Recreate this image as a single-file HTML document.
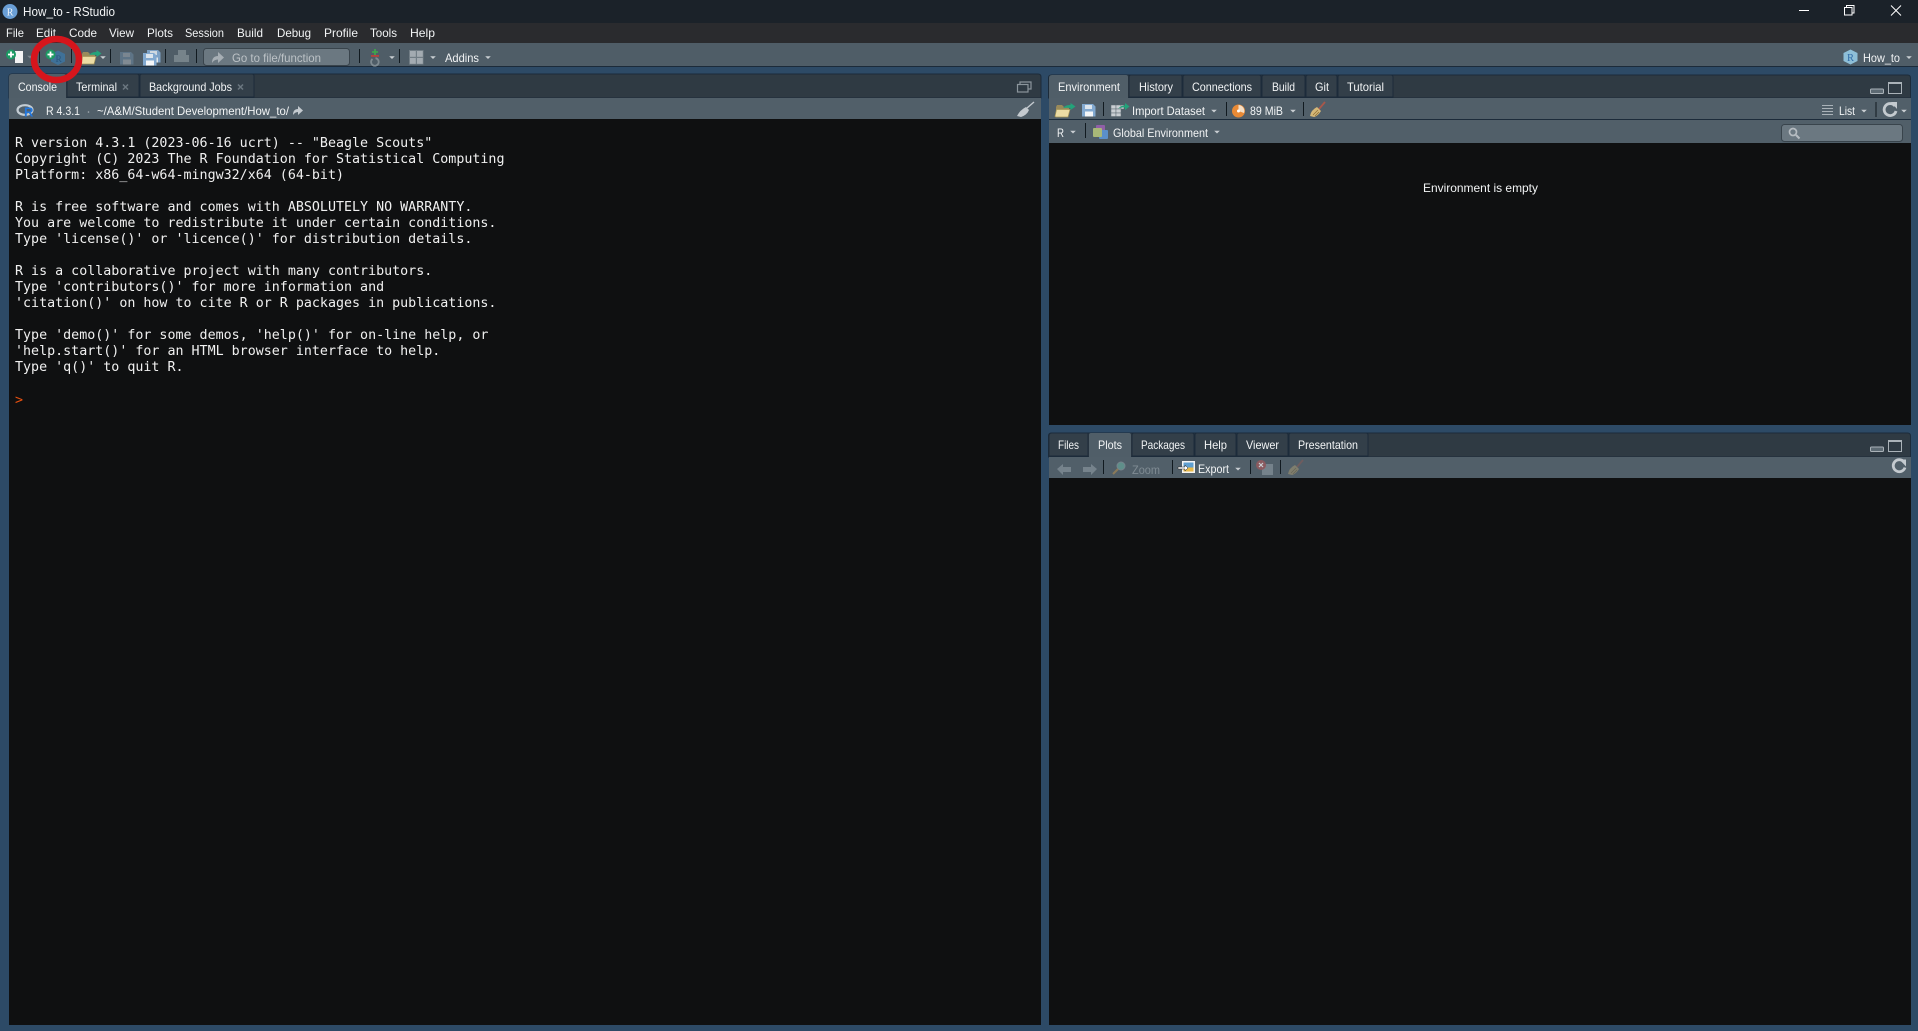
<!DOCTYPE html>
<html><head><meta charset="utf-8"><title>How_to - RStudio</title>
<style>
html,body{margin:0;padding:0;width:1918px;height:1031px;overflow:hidden;background:#2d4a66}
svg{display:block}
text{font-family:"Liberation Sans",sans-serif;font-size:12px;fill:#f2f4f5}
.m text{font-family:"DejaVu Sans Mono","Liberation Mono",monospace;font-size:13.33px;fill:#f0f0f0}
</style></head><body>
<svg width="1918" height="1031" viewBox="0 0 1918 1031" xmlns="http://www.w3.org/2000/svg">
<defs>
<path id="d" d="M-2.800 -1.300h5.600l-2.800 2.800z" fill="#c9ced2"/>
<g id="folder"><path d="M1 4l1-2h5l2 2h5v3H1z" fill="#9a8a5a"/><path d="M0 13.500l1.500-7h13.500l-2 7.500H1z" fill="#ecdca4" stroke="#a89658" stroke-width=".7"/><path d="M8 5q3-3.500 7.500-3V0l5 3.500-5 3.500V5Q11 4.500 8 5z" fill="#23a37a"/></g>
<g id="floppy"><path d="M0 0h11l2.500 2.500V12.500H0z" fill="#82a9d0"/><rect x="3" y="1" width="7" height="4" fill="#dde6ee"/><rect x="3" y="7.500" width="8" height="5" fill="#f4f6f8"/></g>
<g id="broom"><path d="M9 7L15 0" stroke="#a8574a" stroke-width="1.800"/><path d="M0 14Q1 8 7 5l4 4q-3 5-7 6z" fill="#d5b878"/><path d="M3 13l5-5M5 14l4-4" stroke="#8d6c30" stroke-width=".7"/></g>
</defs>

<rect width="1918" height="1031" fill="#2d4a66"/>
<!-- title bar -->
<rect width="1918" height="23" fill="#1b2229"/>
<circle cx="10" cy="11.500" r="7.500" fill="#6a9fd6"/>
<text x="6.800" y="15.500" style="font-family:'Liberation Serif',serif;font-size:10px;fill:#eef4fa">R</text>
<text x="23" y="16" textLength="92" lengthAdjust="spacingAndGlyphs" style="font-size:12.500px">How_to - RStudio</text>
<path d="M1799 10.500h10" stroke="#fff" stroke-width="1"/>
<path d="M1844.500 7.500h7.500v7.500h-7.500zM1846.500 7.500v-2h7.500v7.500h-2" fill="none" stroke="#fff" stroke-width="1"/>
<path d="M1890.500 5.500l10 10M1900.500 5.500l-10 10" stroke="#fff" stroke-width="1" transform="translate(.5,0)"/>

<!-- menu bar -->
<rect y="23" width="1918" height="20" fill="#2a2b2e"/>
<text x="6" y="37" textLength="18" lengthAdjust="spacingAndGlyphs">File</text>
<text x="36" y="37" textLength="20" lengthAdjust="spacingAndGlyphs">Edit</text>
<text x="69" y="37" textLength="28" lengthAdjust="spacingAndGlyphs">Code</text>
<text x="109" y="37" textLength="25" lengthAdjust="spacingAndGlyphs">View</text>
<text x="147" y="37" textLength="26" lengthAdjust="spacingAndGlyphs">Plots</text>
<text x="185" y="37" textLength="39" lengthAdjust="spacingAndGlyphs">Session</text>
<text x="237" y="37" textLength="26" lengthAdjust="spacingAndGlyphs">Build</text>
<text x="277" y="37" textLength="34" lengthAdjust="spacingAndGlyphs">Debug</text>
<text x="324" y="37" textLength="34" lengthAdjust="spacingAndGlyphs">Profile</text>
<text x="370" y="37" textLength="27" lengthAdjust="spacingAndGlyphs">Tools</text>
<text x="410" y="37" textLength="25" lengthAdjust="spacingAndGlyphs">Help</text>

<!-- main toolbar -->
<rect y="43" width="1918" height="23" fill="#4f5d67"/>
<rect y="66" width="1918" height="1" fill="#1c2b3a"/>
<!-- new file -->
<path d="M15 51h8v12h-8z" fill="#f4f4f4"/>
<circle cx="11" cy="54.500" r="5" fill="#1c9a63"/><path d="M11 51.500v6M8 54.500h6" stroke="#fff" stroke-width="1.800"/>
<use href="#d" x="30" y="57" opacity=".35"/>
<rect x="39" y="49" width="1" height="14" fill="#111a20"/>
<!-- new project -->
<path d="M58 50.500l7 3.500v7.500l-7 3.500-7-3.500V54z" fill="#3f7198"/>
<text x="55.500" y="62" style="font-family:'Liberation Serif',serif;font-size:9.500px;fill:#2a557c">R</text>
<circle cx="50.500" cy="54.500" r="5" fill="#1c9a63"/><path d="M50.500 51.500v6M47.500 54.500h6" stroke="#fff" stroke-width="1.800"/>
<rect x="71" y="49" width="1" height="14" fill="#111a20"/>
<use href="#folder" x="81" y="50"/>
<use href="#d" x="103" y="57.500"/>
<rect x="110" y="49" width="1" height="14" fill="#111a20"/>
<!-- saves -->
<g opacity=".3"><use href="#floppy" x="120" y="52"/></g>
<use href="#floppy" x="147" y="50" opacity=".9"/><use href="#floppy" x="143" y="53"/>
<rect x="165" y="49" width="1" height="14" fill="#111a20"/>
<path d="M178 50h8v5h3v7h-15v-7h4z" fill="#76838a"/>
<rect x="196" y="49" width="1" height="14" fill="#111a20"/>
<!-- go to file -->
<rect x="203.500" y="48.500" width="146" height="17" rx="3" fill="#6b7881" stroke="#39444c"/>
<path d="M212 63q0-7 6-7v-4l6 5.500-6 5.500v-3.500q-4 0-6 3.500z" fill="#a7afb5"/>
<text x="232" y="62" textLength="89" lengthAdjust="spacingAndGlyphs" style="fill:#bcc2c6">Go to file/function</text>
<rect x="359" y="49" width="1" height="14" fill="#111a20"/>
<!-- vcs-ish -->
<path d="M375 49v6M372 52h6" stroke="#3fa34d" stroke-width="1.800"/>
<rect x="371" y="55" width="8" height="1.800" fill="#b6423d"/>
<path d="M372.500 59a3.800 3.800 0 1 0 3-.8" fill="none" stroke="#7f8b92" stroke-width="1.800"/>
<use href="#d" x="392" y="57.500"/>
<rect x="399" y="49" width="1" height="14" fill="#111a20"/>
<rect x="409" y="50" width="14.500" height="14.500" fill="#717d85"/>
<g fill="#a3abb1"><rect x="410" y="51" width="5.800" height="5.800"/><rect x="417" y="51" width="5.800" height="5.800"/><rect x="410" y="58" width="5.800" height="5.800"/><rect x="417" y="58" width="5.800" height="5.800"/></g>
<use href="#d" x="433" y="57.500"/>
<text x="445" y="62" textLength="34" lengthAdjust="spacingAndGlyphs">Addins</text>
<use href="#d" x="488" y="57.500"/>
<!-- project right -->
<path d="M1850.500 49.500l7 3.500v8l-7 3.500-7-3.500v-8z" fill="#8ebfd8"/>
<text x="1847" y="61" style="font-family:'Liberation Serif',serif;font-size:10.500px;fill:#2f6ca8">R</text>
<text x="1863" y="62" textLength="37" lengthAdjust="spacingAndGlyphs">How_to</text>
<use href="#d" x="1909" y="57.500"/>

<!-- LEFT PANE -->
<path d="M9 77q0-3 3-3h1026q3 0 3 3v21H9z" fill="#2f3a43" stroke="#1c2b3a" stroke-width="1"/>
<path d="M9 98V77q0-3 3-3h52q2 0 2 2v22z" fill="#505e68"/>
<path d="M67 97V76q0-2 2-2h68q2 0 2 2v21z" fill="#333f49" stroke="#1c2b3a" stroke-width="1"/>
<path d="M140 97V76q0-2 2-2h110q2 0 2 2v21z" fill="#333f49" stroke="#1c2b3a" stroke-width="1"/>
<text x="18" y="91" textLength="39" lengthAdjust="spacingAndGlyphs">Console</text>
<text x="76" y="91" textLength="41" lengthAdjust="spacingAndGlyphs">Terminal</text>
<path d="M123 84.500l5 5M128 84.500l-5 5" stroke="#6b7780" stroke-width="1.500"/>
<text x="149" y="91" textLength="83" lengthAdjust="spacingAndGlyphs">Background Jobs</text>
<path d="M238 84.500l5 5M243 84.500l-5 5" stroke="#6b7780" stroke-width="1.500"/>
<!-- restore icon -->
<path d="M1020 84.500v-2.500h11v7h-3" fill="none" stroke="#8b959c" stroke-width="1.200"/>
<rect x="1017.500" y="84.500" width="10.500" height="7.500" fill="#2f3a43" stroke="#8b959c" stroke-width="1.200"/>
<!-- console toolbar -->
<rect x="9" y="98" width="1032" height="21" fill="#515f69"/>
<ellipse cx="25" cy="110" rx="7.500" ry="4.800" fill="none" stroke="#c3ccd3" stroke-width="2.200"/>
<text x="24" y="116.500" style="font-weight:bold;font-size:13px;fill:#2377dd">R</text>
<text x="46" y="115" textLength="34" lengthAdjust="spacingAndGlyphs">R 4.3.1</text>
<circle cx="88.500" cy="112" r=".8" fill="#a7afb5"/>
<text x="97" y="115" textLength="192" lengthAdjust="spacingAndGlyphs">~/A&amp;M/Student Development/How_to/</text>
<path d="M293 115q0-6 5-6v-3l5 4.500-5 4.500v-3q-3 0-5 3z" fill="#c4cacf"/>
<!-- broom grey -->
<path d="M1027 108l7-6" stroke="#c4cacf" stroke-width="1.400"/>
<path d="M1017 116q3-6 9-9l3 3q-2 5-8 7z" fill="#c4cacf"/>
<!-- console body -->
<rect x="9" y="119" width="1032" height="906" fill="#0f1011"/>
<g class="m">
<text x="15" y="147">R version 4.3.1 (2023-06-16 ucrt) -- "Beagle Scouts"</text>
<text x="15" y="163">Copyright (C) 2023 The R Foundation for Statistical Computing</text>
<text x="15" y="179">Platform: x86_64-w64-mingw32/x64 (64-bit)</text>
<text x="15" y="211">R is free software and comes with ABSOLUTELY NO WARRANTY.</text>
<text x="15" y="227">You are welcome to redistribute it under certain conditions.</text>
<text x="15" y="243">Type 'license()' or 'licence()' for distribution details.</text>
<text x="15" y="275">R is a collaborative project with many contributors.</text>
<text x="15" y="291">Type 'contributors()' for more information and</text>
<text x="15" y="307">'citation()' on how to cite R or R packages in publications.</text>
<text x="15" y="339">Type 'demo()' for some demos, 'help()' for on-line help, or</text>
<text x="15" y="355">'help.start()' for an HTML browser interface to help.</text>
<text x="15" y="371">Type 'q()' to quit R.</text>
<text x="15" y="404" style="fill:#e8500f">&gt;</text>
</g>

<!-- RIGHT TOP PANE -->
<path d="M1048.500 78q0-3 3-3h856q3 0 3 3v20h-862z" fill="#2f3a43" stroke="#1c2b3a" stroke-width="1"/>
<path d="M1049 98V78q0-3 3-3h74q2 0 2 2v21z" fill="#505e68"/>
<g fill="#333f49" stroke="#1c2b3a" stroke-width="1">
<path d="M1129 97V77q0-2 2-2h50q1 0 1 2v20z"/>
<path d="M1183 97V77q0-2 2-2h74q2 0 2 2v20z"/>
<path d="M1262 97V77q0-2 2-2h39q2 0 2 2v20z"/>
<path d="M1306 97V77q0-2 2-2h27q2 0 2 2v20z"/>
<path d="M1338 97V77q0-2 2-2h51q2 0 2 2v20z"/>
</g>
<text x="1058" y="91" textLength="62" lengthAdjust="spacingAndGlyphs">Environment</text>
<text x="1139" y="91" textLength="34" lengthAdjust="spacingAndGlyphs">History</text>
<text x="1192" y="91" textLength="60" lengthAdjust="spacingAndGlyphs">Connections</text>
<text x="1272" y="91" textLength="23" lengthAdjust="spacingAndGlyphs">Build</text>
<text x="1315" y="91" textLength="14" lengthAdjust="spacingAndGlyphs">Git</text>
<text x="1347" y="91" textLength="37" lengthAdjust="spacingAndGlyphs">Tutorial</text>
<rect x="1870.500" y="89" width="13" height="4.500" rx="1" fill="#5d6a73" stroke="#aab2b8" stroke-width="1"/>
<rect x="1888.500" y="82.500" width="13" height="11" fill="none" stroke="#aab2b8" stroke-width="1"/><rect x="1888" y="82" width="14" height="2" fill="#aab2b8"/>
<!-- toolbar 1 -->
<rect x="1049" y="98" width="862" height="21" fill="#515f69"/>
<rect x="1049" y="119" width="862" height="1" fill="#1c2b3a"/>
<use href="#folder" x="1055" y="103"/>
<use href="#floppy" x="1082" y="104"/>
<rect x="1103" y="102" width="1" height="14" fill="#111a20"/>
<g fill="#c9ced2" stroke="#5a6871" stroke-width=".5"><rect x="1111" y="105" width="5" height="4"/><rect x="1116" y="105" width="5" height="4"/><rect x="1121" y="105" width="3" height="4"/><rect x="1111" y="109" width="5" height="4"/><rect x="1116" y="109" width="5" height="4"/><rect x="1111" y="113" width="5" height="3.500"/><rect x="1116" y="113" width="5" height="3.500"/></g>
<path d="M1118 109q3-4 7-3.500v-2.500l4.500 3.500-4.500 3.500v-2.500q-4-.5-7 1.500z" fill="#23a37a"/>
<text x="1132" y="115" textLength="73" lengthAdjust="spacingAndGlyphs">Import Dataset</text>
<use href="#d" x="1214" y="111"/>
<rect x="1226" y="102" width="1" height="14" fill="#111a20"/>
<circle cx="1238.500" cy="111" r="6.500" fill="#e88a36"/>
<path d="M1238.500 111v-6a6 6 0 0 1 5.500 8z" fill="#f4dfc6"/><circle cx="1238.500" cy="111" r="1.500" fill="#fff"/>
<text x="1250" y="115" textLength="33" lengthAdjust="spacingAndGlyphs">89 MiB</text>
<use href="#d" x="1293" y="111"/>
<rect x="1303" y="102" width="1" height="14" fill="#111a20"/>
<use href="#broom" x="1310" y="102"/>
<path d="M1822 105.500h11M1822 108.500h11M1822 111.500h11M1822 114.500h11" stroke="#aab2b8" stroke-width="1"/>
<text x="1839" y="115" textLength="16" lengthAdjust="spacingAndGlyphs">List</text>
<use href="#d" x="1864" y="111"/>
<rect x="1875.500" y="102" width="1" height="15" fill="#111a20"/>
<path d="M1895 106a6 6 0 1 0 1 5" fill="none" stroke="#c4cacf" stroke-width="2.800"/><path d="M1891 102h6v7z" fill="#c4cacf"/>
<use href="#d" x="1904" y="111"/>
<!-- toolbar 2 -->
<rect x="1049" y="120" width="862" height="23" fill="#515f69"/>
<text x="1057" y="137" textLength="7" lengthAdjust="spacingAndGlyphs">R</text>
<use href="#d" x="1073" y="132"/>
<rect x="1085" y="123" width="1" height="15" fill="#111a20"/>
<rect x="1096" y="125" width="9" height="9" rx="1" fill="#8f5fa6"/>
<rect x="1099" y="130" width="9" height="9" rx="1" fill="#5b8fc9"/>
<rect x="1093" y="128" width="9" height="9" rx="1" fill="#a8b878"/>
<text x="1113" y="137" textLength="95" lengthAdjust="spacingAndGlyphs">Global Environment</text>
<use href="#d" x="1217" y="132"/>
<rect x="1781.500" y="124.500" width="121" height="17" rx="3" fill="#6b7881" stroke="#39444c"/>
<circle cx="1793" cy="132" r="3.500" fill="none" stroke="#b6bcc1" stroke-width="1.700"/><path d="M1796 135l3.500 3.500" stroke="#b6bcc1" stroke-width="2"/>
<!-- body -->
<rect x="1049" y="143" width="862" height="282" fill="#0f1011"/>
<text x="1423" y="192" textLength="115" lengthAdjust="spacingAndGlyphs">Environment is empty</text>

<!-- RIGHT BOTTOM PANE -->
<path d="M1048.500 436q0-3 3-3h856q3 0 3 3v21h-862z" fill="#2f3a43" stroke="#1c2b3a" stroke-width="1"/>
<g fill="#333f49" stroke="#1c2b3a" stroke-width="1">
<path d="M1049 456v-20q0-3 3-3h36v23z"/>
<path d="M1132 456v-21q0-2 2-2h58q2 0 2 2v21z"/>
<path d="M1195 456v-21q0-2 2-2h37q2 0 2 2v21z"/>
<path d="M1237 456v-21q0-2 2-2h47q2 0 2 2v21z"/>
<path d="M1289 456v-21q0-2 2-2h75q2 0 2 2v21z"/>
</g>
<path d="M1089 457v-22q0-2 2-2h38q2 0 2 2v22z" fill="#505e68"/>
<text x="1058" y="449" textLength="21" lengthAdjust="spacingAndGlyphs">Files</text>
<text x="1098" y="449" textLength="24" lengthAdjust="spacingAndGlyphs">Plots</text>
<text x="1141" y="449" textLength="44" lengthAdjust="spacingAndGlyphs">Packages</text>
<text x="1204" y="449" textLength="23" lengthAdjust="spacingAndGlyphs">Help</text>
<text x="1246" y="449" textLength="33" lengthAdjust="spacingAndGlyphs">Viewer</text>
<text x="1298" y="449" textLength="60" lengthAdjust="spacingAndGlyphs">Presentation</text>
<rect x="1870.500" y="447" width="13" height="4.500" rx="1" fill="#5d6a73" stroke="#aab2b8" stroke-width="1"/>
<rect x="1888.500" y="440.500" width="13" height="11" fill="none" stroke="#aab2b8" stroke-width="1"/><rect x="1888" y="440" width="14" height="2" fill="#aab2b8"/>
<rect x="1049" y="457" width="862" height="21" fill="#515f69"/>
<path d="M1057 469l6-5v3h8v5h-8v3z" fill="#76838c"/>
<path d="M1097 469l-6-5v3h-8v5h8v3z" fill="#76838c"/>
<rect x="1103" y="460" width="1" height="14" fill="#111a20"/>
<circle cx="1121" cy="466" r="4" fill="#5f8f8a" stroke="#76838c"/><path d="M1118 469l-5 5" stroke="#8a7a5a" stroke-width="2"/>
<text x="1132" y="474" textLength="28" lengthAdjust="spacingAndGlyphs" style="fill:#7f8b93">Zoom</text>
<rect x="1172" y="460" width="1" height="14" fill="#111a20"/>
<rect x="1182" y="461" width="13" height="12" fill="#f4f4f4"/><rect x="1183.500" y="462.500" width="10" height="5" fill="#5f9fd0"/><rect x="1183.500" y="467.500" width="10" height="4" fill="#e8b948"/>
<path d="M1178 467h7v-2l3 3-3 3v-2h-7z" fill="#fff" stroke="#222" stroke-width=".5"/>
<text x="1198" y="473" textLength="31" lengthAdjust="spacingAndGlyphs">Export</text>
<use href="#d" x="1238" y="469"/>
<rect x="1250" y="460" width="1" height="14" fill="#111a20"/>
<rect x="1262" y="464" width="11" height="11" fill="#75828b"/>
<circle cx="1261" cy="465" r="5" fill="#8a5a5f"/><path d="M1259 463l4 4M1263 463l-4 4" stroke="#c9ced2" stroke-width="1.200"/>
<rect x="1280" y="460" width="1" height="14" fill="#111a20"/>
<use href="#broom" x="1288" y="460" opacity=".35"/>
<path d="M1904 462a6 6 0 1 0 1 5.500" fill="none" stroke="#c4cacf" stroke-width="2.800"/><path d="M1899.500 459.500h6.500v7z" fill="#c4cacf"/>
<rect x="1049" y="478" width="862" height="547" fill="#0f1011"/>

<!-- red circle on top of everything -->
<ellipse cx="56.500" cy="59.500" rx="22.500" ry="20.500" fill="none" stroke="#d6151c" stroke-width="6.500"/>
</svg>
</body></html>
